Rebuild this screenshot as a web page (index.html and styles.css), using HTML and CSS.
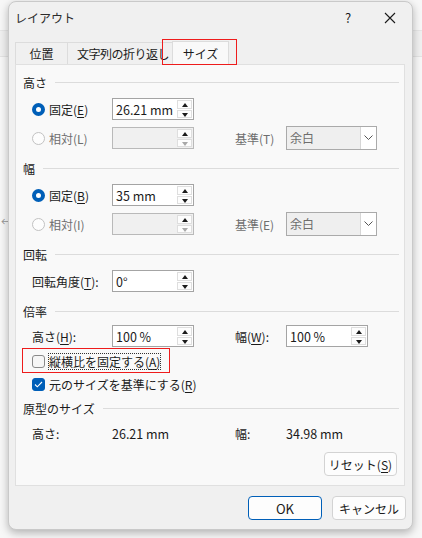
FILE: index.html
```html
<!DOCTYPE html>
<html lang="ja">
<head>
    <meta charset="UTF-8">
    <title>レイアウト</title>
    <link rel="stylesheet" href="styles.css">
</head>
<body>
    <div class="backdrop">
        <span class="back-arrow">&larr;</span>
    </div>
    <div class="dialog">
        <div class="titlebar">
            <span class="title">レイアウト</span>
            <span class="help">?</span>
            <svg class="close" width="12" height="12" viewBox="0 0 12 12"><path d="M1 1L11 11M11 1L1 11" stroke="#1a1a1a" stroke-width="1.1" fill="none"/></svg>
        </div>

        <div class="tabs">
            <div class="tab pos">位置</div>
            <div class="tab wrap">文字列の折り返し</div>
            <div class="tab active">サイズ<span class="mark tab-mark"></span></div>
        </div>

        <div class="panel">
            <!-- 高さ -->
            <div class="group">
                <div class="group-head"><span>高さ</span></div>
                <div class="row">
                    <label class="opt"><span class="radio on"></span>固定(<u>E</u>)</label>
                    <div class="spin"><span class="val">26.21 mm</span><span class="btns"><i class="up"></i><i class="down"></i></span></div>
                </div>
                <div class="row">
                    <label class="opt off"><span class="radio"></span>相対(L)</label>
                    <div class="spin disabled"><span class="val"></span><span class="btns"><i class="up"></i><i class="down"></i></span></div>
                    <span></span>
                    <span class="lbl off">基準(T)</span>
                    <div class="combo"><span class="val">余白</span><span class="drop"><svg width="9" height="6" viewBox="0 0 9 6"><path d="M0.5 0.5L4.5 4.5L8.5 0.5" stroke="#555" fill="none"/></svg></span></div>
                </div>
            </div>

            <!-- 幅 -->
            <div class="group">
                <div class="group-head"><span>幅</span></div>
                <div class="row">
                    <label class="opt"><span class="radio on"></span>固定(<u>B</u>)</label>
                    <div class="spin"><span class="val">35 mm</span><span class="btns"><i class="up"></i><i class="down"></i></span></div>
                </div>
                <div class="row">
                    <label class="opt off"><span class="radio"></span>相対(I)</label>
                    <div class="spin disabled"><span class="val"></span><span class="btns"><i class="up"></i><i class="down"></i></span></div>
                    <span></span>
                    <span class="lbl off">基準(E)</span>
                    <div class="combo"><span class="val">余白</span><span class="drop"><svg width="9" height="6" viewBox="0 0 9 6"><path d="M0.5 0.5L4.5 4.5L8.5 0.5" stroke="#555" fill="none"/></svg></span></div>
                </div>
            </div>

            <!-- 回転 -->
            <div class="group">
                <div class="group-head"><span>回転</span></div>
                <div class="row">
                    <span class="lbl">回転角度(<u>T</u>):</span>
                    <div class="spin"><span class="val">0°</span><span class="btns"><i class="up"></i><i class="down"></i></span></div>
                </div>
            </div>

            <!-- 倍率 -->
            <div class="group scale">
                <div class="group-head"><span>倍率</span></div>
                <div class="row">
                    <span class="lbl">高さ(<u>H</u>):</span>
                    <div class="spin"><span class="val">100 %</span><span class="btns"><i class="up"></i><i class="down"></i></span></div>
                    <span></span>
                    <span class="lbl">幅(<u>W</u>):</span>
                    <div class="spin"><span class="val">100 %</span><span class="btns"><i class="up"></i><i class="down"></i></span></div>
                </div>
                <div class="check-row lock">
                    <span class="check"></span>
                    <span class="focus">縦横比を固定する(<u>A</u>)</span>
                    <span class="mark lock-mark"></span>
                </div>
                <div class="check-row">
                    <span class="check on"><svg width="9" height="7" viewBox="0 0 9 7"><path d="M1 3.5L3.3 5.8L8 1" stroke="#fff" stroke-width="1.1" fill="none"/></svg></span>
                    <span>元のサイズを基準にする(<u>R</u>)</span>
                </div>
            </div>

            <!-- 原型のサイズ -->
            <div class="group orig">
                <div class="group-head"><span>原型のサイズ</span></div>
                <div class="row text-row">
                    <span class="lbl">高さ:</span>
                    <span class="num">26.21 mm</span>
                    <span></span>
                    <span class="lbl">幅:</span>
                    <span class="num">34.98 mm</span>
                </div>
                <div class="reset-row">
                    <button class="btn">リセット(<u>S</u>)</button>
                </div>
            </div>
        </div>

        <div class="footer">
            <button class="btn primary">OK</button>
            <button class="btn">キャンセル</button>
        </div>
    </div>
</body>
</html>
```

FILE: styles.css
```css
body {
    margin: 0;
    padding: 1px 0 0 8px;
    font-family: "Noto Sans CJK JP", "Noto Sans", sans-serif;
    font-size: 12px;
    color: #1b1b1b;
    background: #f7f7f7;
    position: relative;
    height: 537px;
    overflow: hidden;
}
.backdrop {
    position: absolute;
    left: 0;
    top: 0;
    right: 0;
    bottom: 0;
    background:
        linear-gradient(#f7f7f7 0, #f7f7f7 30px, #e6e6e6 30px, #e6e6e6 31px, #f0f0f0 31px, #f0f0f0 56px, #e3e3e3 56px, #e3e3e3 57px, #f7f7f7 57px);
}
.back-arrow {
    position: absolute;
    left: 1px;
    top: 213px;
    color: #999;
    font-size: 11px;
}
.dialog {
    position: relative;
    width: 405px;
    height: 529px;
    background: #f0f0f0;
    border: 1px solid #c9c9c9;
    border-radius: 8px;
    box-sizing: border-box;
    box-shadow: 0 3px 8px rgba(0, 0, 0, 0.28);
    display: flex;
    flex-direction: column;
}
.titlebar {
    height: 31px;
    display: flex;
    align-items: center;
    padding: 0 0 0 6px;
}
.title {
    flex: 1;
    color: #2b2b2b;
}
.help {
    width: 20px;
    font-size: 13px;
    margin-right: 26px;
    text-align: center;
}
.close {
    margin-right: 16px;
}

/* tabs */
.tabs {
    display: flex;
    align-items: flex-end;
    height: 31px;
    padding-left: 6px;
}
.tab {
    position: relative;
    height: 22px;
    line-height: 22px;
    box-sizing: border-box;
    border: 1px solid #dcdcdc;
    border-bottom: none;
    border-right: none;
    background: #f0f0f0;
    color: #1b1b1b;
    text-align: center;
    white-space: nowrap;
}
.tab.pos {
    width: 52px;
}
.tab.wrap {
    width: 105px;
    text-align: left;
    padding-left: 9px;
    letter-spacing: -0.5px;
    overflow: hidden;
}
.tab.active {
    width: 57px;
    height: 24px;
    line-height: 24px;
    background: #f9f9f9;
    border-right: 1px solid #dcdcdc;
    margin-bottom: -1px;
    z-index: 1;
}
.mark {
    position: absolute;
    border: 1px solid #ee1c1c;
}
.tab-mark {
    left: -11px;
    right: -9px;
    top: -3px;
    bottom: 0;
}

/* content panel */
.panel {
    margin: 0 7px 0 6px;
    height: 422px;
    box-sizing: border-box;
    background: #f9f9f9;
    border: 1px solid #e0e0e0;
    padding: 9px 5px 0 7px;
}
.group {
    margin-bottom: 10px;
}
.group-head {
    display: flex;
    align-items: center;
    height: 16px;
    margin-bottom: 7px;
}
.group-head::after {
    content: "";
    flex: 1;
    height: 1px;
    background: #dcdcdc;
    margin-left: 8px;
}
.row {
    display: grid;
    grid-template-columns: 80px 82px 41px 51px auto;
    align-items: center;
    height: 24px;
    padding-left: 9px;
    margin-bottom: 5px;
}
.opt {
    display: flex;
    align-items: center;
}
.off {
    color: #6e6e6e;
}
u {
    text-decoration: underline;
    text-underline-offset: 2px;
}
.radio {
    width: 13px;
    height: 13px;
    box-sizing: border-box;
    border: 1px solid #c2c2c2;
    border-radius: 50%;
    background: #fdfdfd;
    margin-right: 4px;
}
.radio.on {
    border: 4px solid #005fb8;
    background: #fff;
}

/* spin boxes */
.spin {
    width: 82px;
    height: 22px;
    box-sizing: border-box;
    border: 1px solid #a4a4a4;
    background: #fff;
    display: flex;
    align-items: center;
}
.spin .val {
    flex: 1;
    padding-left: 3px;
    font-size: 12.5px;
}
.spin.disabled {
    background: #f0f0f0;
    border-color: #b9b9b9;
}
.btns {
    width: 15px;
    height: 18px;
    margin-right: 1px;
    display: flex;
    flex-direction: column;
    gap: 1px;
}
.btns i {
    flex: 1;
    border: 1px solid #dedede;
    background: #fdfdfd;
    position: relative;
}
.btns i::after {
    content: "";
    position: absolute;
    left: 4px;
    top: 2px;
    border-left: 3px solid transparent;
    border-right: 3px solid transparent;
}
.btns .up::after {
    border-bottom: 4px solid #1b1b1b;
}
.btns .down::after {
    border-top: 4px solid #1b1b1b;
}
.spin.disabled .btns .down::after {
    border-top-color: #a8a8a8;
}

/* combo */
.combo {
    width: 91px;
    height: 24px;
    box-sizing: border-box;
    border: 1px solid #aaaaaa;
    background: #efefef;
    display: flex;
}
.combo .val {
    flex: 1;
    line-height: 22px;
    padding-left: 3px;
    color: #6e6e6e;
}
.combo .drop {
    width: 15px;
    background: #fff;
    border-left: 1px solid #d6d6d6;
    display: flex;
    align-items: center;
    justify-content: center;
}

/* checkboxes */
.scale .group-head {
    margin-bottom: 5px;
}
.scale .row {
    margin-bottom: 1px;
}
.check-row {
    position: relative;
    display: flex;
    align-items: center;
    height: 22px;
    padding-left: 9px;
}
.check-row.lock {
    height: 24px;
}
.check {
    width: 13px;
    height: 13px;
    box-sizing: border-box;
    border: 1px solid #8a8a8a;
    border-radius: 3px;
    background: #f6f6f6;
    margin-right: 4px;
    display: flex;
    align-items: center;
    justify-content: center;
}
.check.on {
    border-color: #005fb8;
    background: #005fb8;
}
.focus {
    outline: 1px dotted #333;
    outline-offset: 0;
    line-height: 15px;
}
.lock-mark {
    left: -1px;
    top: -1px;
    width: 146px;
    height: 23px;
}
.scale {
    margin-bottom: 5px;
}

/* original size */
.text-row {
    height: 20px;
    margin-bottom: 0;
}
.num {
    font-size: 12.5px;
}
.reset-row {
    display: flex;
    justify-content: flex-end;
    margin-top: 9px;
    padding-right: 2px;
}
.btn {
    font-family: inherit;
    font-size: 12px;
    color: #1b1b1b;
    background: #fdfdfd;
    border: 1px solid #d3d3d3;
    border-radius: 4px;
    height: 24px;
    width: 73px;
    padding: 0;
}
.footer {
    display: flex;
    justify-content: flex-end;
    gap: 10px;
    padding: 10px 6px 0 0;
}
.footer .btn {
    width: 74px;
}
.btn.primary {
    border-color: #005fb8;
    font-size: 13px;
}
```
